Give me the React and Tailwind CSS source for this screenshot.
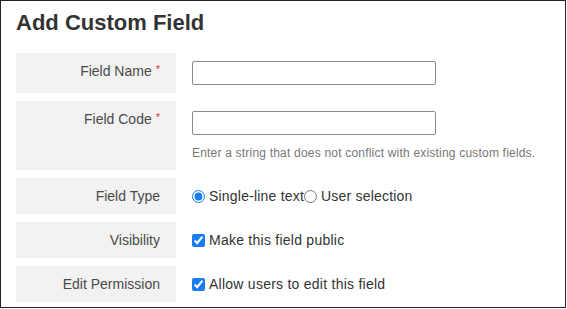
import React from 'react';

const Row = ({ label, required, children }) => (
  <div className="flex">
    <div className="w-[160px] shrink-0 bg-[#f2f2f2] pr-4 py-2 text-right text-[14px] leading-5 text-[#4a4a4a]">
      {label}
      {required && <span className="ml-[4px] align-top text-[11px] leading-4 text-[#e03b3b]">*</span>}
    </div>
    <div className="flex-1 pl-4 py-2">{children}</div>
  </div>
);

const Check = ({ children }) => (
  <label className="flex items-center gap-1 text-[14px] leading-5 tracking-[0.25px] text-[#333]">
    <input type="checkbox" defaultChecked className="m-0 h-[13px] w-[13px] accent-[#1a7cf5]" />
    {children}
  </label>
);

const Radio = ({ checked, children }) => (
  <label className="flex items-center gap-1 text-[14px] leading-5 tracking-[0.2px] text-[#333]">
    <input type="radio" name="ftype" defaultChecked={checked} className="m-0 h-[13px] w-[13px] accent-[#1a7cf5]" />
    {children}
  </label>
);

export default function App() {
  return (
    <div className="w-[566px] h-[308px] border border-[#222] bg-white px-[15px] pt-2 font-['Liberation_Sans',Arial,sans-serif]">
      <h1 className="text-[22px] leading-7 font-bold text-[#333]">Add Custom Field</h1>

      <div className="mt-4 flex flex-col gap-2">
        <Row label="Field Name" required>
          <input type="text" className="block h-6 w-[244px] rounded-[2px] border border-[#8a8a8a] bg-white px-1 text-[14px] outline-none" />
        </Row>

        <Row label="Field Code" required>
          <div className="pt-[2px]">
            <input type="text" className="block h-6 w-[244px] rounded-[2px] border border-[#8a8a8a] bg-white px-1 text-[14px] outline-none" />
            <p className="mt-[9px] text-[12px] leading-[18px] tracking-[0.2px] text-[#777]">
              Enter a string that does not conflict with existing custom fields.
            </p>
          </div>
        </Row>

        <Row label="Field Type">
          <div className="flex items-center">
            <Radio checked>Single-line text</Radio>
            <Radio>User selection</Radio>
          </div>
        </Row>

        <Row label="Visibility">
          <Check>Make this field public</Check>
        </Row>

        <Row label="Edit Permission">
          <Check>Allow users to edit this field</Check>
        </Row>
      </div>
    </div>
  );
}
